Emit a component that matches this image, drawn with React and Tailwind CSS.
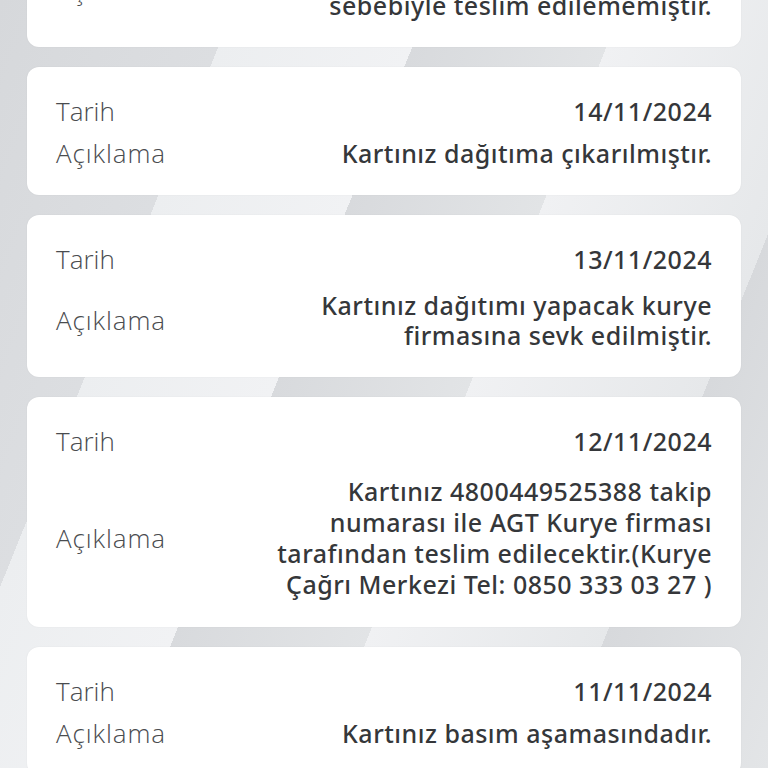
const kayitlar = [
  {
    tarih: "15/11/2024",
    aciklama: ["Kartınız adres bulunamaması", "sebebiyle teslim edilememiştir."],
    gap: "mt-4",
  },
  { tarih: "14/11/2024", aciklama: ["Kartınız dağıtıma çıkarılmıştır."], gap: "mt-3" },
  {
    tarih: "13/11/2024",
    aciklama: ["Kartınız dağıtımı yapacak kurye", "firmasına sevk edilmiştir."],
    gap: "mt-4",
  },
  {
    tarih: "12/11/2024",
    aciklama: [
      "Kartınız 4800449525388 takip",
      "numarası ile AGT Kurye firması",
      "tarafından teslim edilecektir.(Kurye",
      "Çağrı Merkezi Tel: 0850 333 03 27 )",
    ],
    gap: "mt-5",
  },
  { tarih: "11/11/2024", aciklama: ["Kartınız basım aşamasındadır."], gap: "mt-3" },
];

const KayitKarti = ({ kayit }) => {
  return (
    <div className="ml-[27px] w-[714px] rounded-xl bg-white px-[29px] pt-[29px] pb-[27px] shadow-[0_0_2px_rgba(0,0,0,0.06)]">
      <div className="flex items-center justify-between leading-[30px]">
        <span className="text-[26px] text-[#4a4c4f] font-light font-['Open_Sans',sans-serif]">Tarih</span>
        <span className="text-[25px] tracking-[0.5px] text-[#35373a] font-medium">{kayit.tarih}</span>
      </div>
      <div className={`flex items-center justify-between ${kayit.gap}`}>
        <span className="text-[26px] tracking-[0.9px] text-[#4a4c4f] font-light leading-[30px] font-['Open_Sans',sans-serif]">
          Açıklama
        </span>
        <div
          className={`text-right text-[25px] tracking-[0.5px] font-medium text-[#35373a] ${
            kayit.aciklama.length > 2 ? "leading-[31px]" : "leading-[30px]"
          }`}
        >
          {kayit.aciklama.map((satir) => (
            <div key={satir}>{satir}</div>
          ))}
        </div>
      </div>
    </div>
  );
};

export default function App() {
  return (
    <div
      className="h-[768px] w-[768px] overflow-hidden bg-[linear-gradient(112deg,#d6d8db_0%,#dcdee1_22%,#eceef0_22%,#f1f2f4_40%,#d8dadd_40%,#e2e4e6_58%,#f0f1f3_58%,#e6e8ea_80%,#d7d9dc_80%,#e3e5e7_100%)]"
      style={{ fontFamily: "'Noto Sans', 'Open Sans', sans-serif" }}
    >
      {/* ilk kart ekranın üstünden kesiliyor */}
      <div className="-mt-[115px] flex flex-col gap-5">
        {kayitlar.map((kayit) => (
          <KayitKarti key={kayit.tarih} kayit={kayit} />
        ))}
      </div>
    </div>
  );
}
